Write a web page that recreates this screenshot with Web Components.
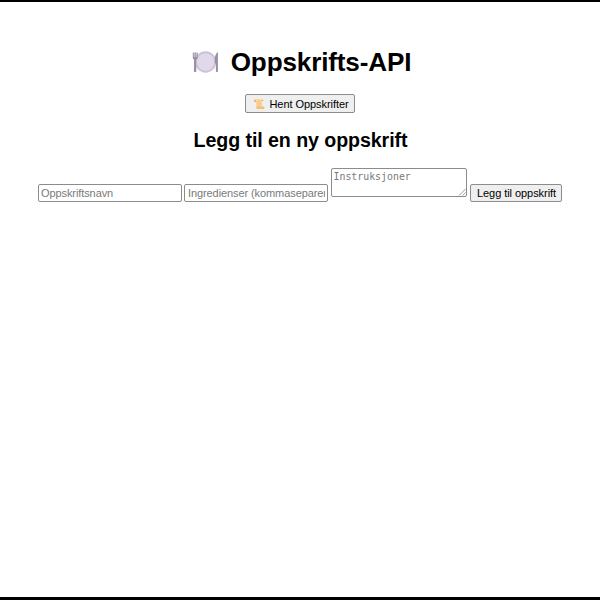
<!DOCTYPE html>
<html lang="no">
<head>
<meta charset="utf-8">
<title>Oppskrifts-API</title>
<style>
html, body { margin: 0; height: 100%; background: #fff; }
body { font-family: "Liberation Sans", Arial, sans-serif; color: #000; overflow: hidden; }
</style>
</head>
<body>
<recipe-app></recipe-app>
<script>
const define = (name, html, setup) => {
  const t = document.createElement('template');
  t.innerHTML = html;
  customElements.define(name, class extends HTMLElement {
    constructor() {
      super();
      this.attachShadow({ mode: 'open' }).append(t.content.cloneNode(true));
    }
    connectedCallback() { if (setup) setup(this, this.shadowRoot); }
  });
};

define('plate-icon', `
<style>:host{display:block;width:27px;height:24px}svg{display:block}</style>
<svg width="27" height="24" viewBox="0 0 27 24">
  <circle cx="13.6" cy="12" r="10.7" fill="#cdc2d8"/>
  <circle cx="13.6" cy="12" r="8.7" fill="#e1d8e9"/>
  <path d="M.8 2.5v5.2q0 1.4 1.3 1.8l-.2 12q1.3 1.2 2.4 0l-.2-12q1.6-.4 1.6-1.8V2.5" fill="#998fa3"/>
  <path d="M2.2 2v5M4.2 2v5" stroke="#fff" stroke-width=".6"/>
  <path d="M25.9 2q-3.1 2-3.1 7.5v4h1.1v8q1 1 2 0z" fill="#998fa3"/>
</svg>`);

define('scroll-icon', `
<style>:host{display:block;width:12px;height:12px}svg{display:block}</style>
<svg width="12" height="12" viewBox="0 0 12 12">
  <path d="M1.8 1h7.4q1.3.1 1.2 1.8H8.9l.3 6.8H3.3L3 4H1.2Q.1 1.6 1.8 1z" fill="#fbd59b"/>
  <path d="M3.5 8.6h7.2q1 .2.8 1.4-.2 1-1.2 1H4.2Q2.5 10.6 3.5 8.6z" fill="#f3bd7a"/>
  <path d="M1 2.6h2V4H1.3zM8.9 2.1h1.4v.9H8.9z" fill="#e8a963"/>
  <path d="M4.3 3.6h3.5M4.4 5.3h3.5M4.5 7h3.5" stroke="#eeb975" stroke-width=".6"/>
</svg>`);

define('form-button', `
<style>
:host{display:block;flex:none}
button{box-sizing:border-box;display:flex;align-items:center;justify-content:center;width:100%;height:100%;margin:0;padding:1px 0 0 1px;
 border:1px solid #8c8c8c;border-radius:2px;background:#efefef;color:#000;font:11px/13px "Liberation Sans",Arial,sans-serif;letter-spacing:-.06px;white-space:nowrap}
</style>
<button><slot></slot></button>`);

define('text-field', `
<style>
:host{display:block;flex:none;width:144px;height:18px}
input{box-sizing:border-box;display:block;width:100%;height:100%;margin:0;padding:0 2px 0 var(--inset,2px);
 border:1px solid #8c8c8c;border-radius:2px;background:#fff;font:11px "Liberation Sans",Arial,sans-serif;letter-spacing:-.09px}
input::placeholder{color:#7a7a7a}
</style>
<input>`, (el, r) => { r.querySelector('input').placeholder = el.getAttribute('label'); });

define('text-box', `
<style>
:host{display:block;position:relative;flex:none;width:136px;height:29px}
textarea{box-sizing:border-box;display:block;width:100%;height:100%;margin:0;padding:1px 1.5px;resize:none;overflow:hidden;
 border:1px solid #8c8c8c;border-radius:2px;background:#fff;font:9.9px/13px "DejaVu Sans Mono",monospace}
textarea::placeholder{color:#7a7a7a}
svg{position:absolute;right:1px;bottom:1px}
</style>
<textarea></textarea>
<svg width="8" height="8" viewBox="0 0 8 8"><path d="M1 7.5 7.5 1M4.5 7.5l3-3" stroke="#858585" stroke-width=".8"/></svg>`,
(el, r) => { r.querySelector('textarea').placeholder = el.getAttribute('label'); });

define('recipe-app', `
<style>
:host{box-sizing:border-box;display:flex;flex-direction:column;align-items:center;height:600px;
 border-top:2px solid #000;border-bottom:3px solid #000;padding-top:44px}
h1{display:flex;align-items:center;gap:12px;margin:0;padding-left:3px;height:32px;font-size:26.1px;letter-spacing:-.15px;line-height:32px;white-space:nowrap}
h2{margin:16px 0 0;padding-left:1px;font-size:19.6px;letter-spacing:-.07px;line-height:22px;white-space:nowrap}
.fetch{width:110px;height:19px;margin-top:16px}
scroll-icon{margin-right:4px}
.fetch span{margin-right:-1px}
form{display:flex;align-items:flex-start;margin-top:16px}
.f1,.f2,.add{margin-top:17px}
.f1{margin-right:2px}
.f2{margin-right:3px;--inset:3px}
text-box{margin-top:1px;margin-right:3px}
.add{width:92px;height:18px}
</style>
<h1><plate-icon></plate-icon><span>Oppskrifts-API</span></h1>
<form-button class="fetch"><scroll-icon></scroll-icon><span>Hent Oppskrifter</span></form-button>
<h2>Legg til en ny oppskrift</h2>
<form>
  <text-field class="f1" label="Oppskriftsnavn"></text-field>
  <text-field class="f2" label="Ingredienser (kommaseparert)"></text-field>
  <text-box label="Instruksjoner"></text-box>
  <form-button class="add">Legg til oppskrift</form-button>
</form>`);
</script>
</body>
</html>
